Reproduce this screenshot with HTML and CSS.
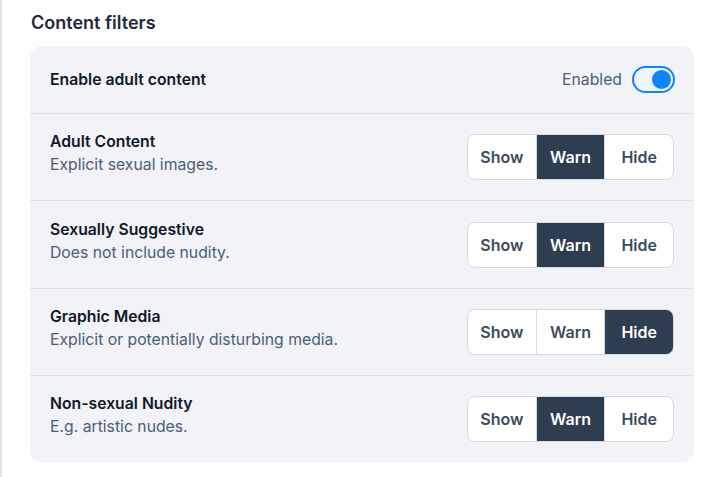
FILE: index.html
```html
<!DOCTYPE html>
<html>
<head>
<meta charset="utf-8">
<link rel="stylesheet" href="styles.css">
</head>
<body>
<div class="page">
  <h2 class="title">Content filters</h2>
  <div class="card">
    <div class="row row-first">
      <div class="label-strong">Enable adult content</div>
      <div class="toggle-wrap">
        <span class="toggle-text">Enabled</span>
        <span class="toggle"><span class="knob"></span></span>
      </div>
    </div>
    <div class="row">
      <div class="info">
        <div class="label-strong">Adult Content</div>
        <div class="desc">Explicit sexual images.</div>
      </div>
      <div class="seg">
        <span class="opt">Show</span><span class="opt active">Warn</span><span class="opt">Hide</span>
      </div>
    </div>
    <div class="row">
      <div class="info">
        <div class="label-strong">Sexually Suggestive</div>
        <div class="desc">Does not include nudity.</div>
      </div>
      <div class="seg">
        <span class="opt">Show</span><span class="opt active">Warn</span><span class="opt">Hide</span>
      </div>
    </div>
    <div class="row">
      <div class="info">
        <div class="label-strong">Graphic Media</div>
        <div class="desc">Explicit or potentially disturbing media.</div>
      </div>
      <div class="seg">
        <span class="opt">Show</span><span class="opt">Warn</span><span class="opt active">Hide</span>
      </div>
    </div>
    <div class="row">
      <div class="info">
        <div class="label-strong">Non-sexual Nudity</div>
        <div class="desc">E.g. artistic nudes.</div>
      </div>
      <div class="seg">
        <span class="opt">Show</span><span class="opt active">Warn</span><span class="opt">Hide</span>
      </div>
    </div>
  </div>
</div>
</body>
</html>
```
FILE: styles.css
```css
html, body {
  margin: 0;
  padding: 0;
  background: #ffffff;
}
body {
  font-family: Inter, "Noto Sans", sans-serif;
  color: #0f172a;
}
.page {
  border-left: 2px solid #dce3ec;
  min-height: 477px;
  box-sizing: border-box;
  padding: 10px 26px 0 28px;
}
.title {
  margin: 0 0 11px 1px;
  font-size: 18px;
  font-weight: 600;
  line-height: 25px;
  color: #1e293b;
}
.card {
  background: #f1f3f6;
  border-radius: 12px;
  width: 664px;
}
.row {
  display: flex;
  align-items: center;
  justify-content: space-between;
  padding: 20px 20px;
  border-top: 1px solid #d9e0e8;
  height: 46.35px;
}
.row-first {
  border-top: none;
  padding: 20px 19px 20px 20px;
  height: 27px;
}
.info {
  padding-bottom: 8px;
}
.label-strong {
  font-size: 15.75px;
  font-weight: 600;
  line-height: 23px;
  color: #111827;
}
.desc {
  font-size: 15.75px;
  line-height: 23px;
  color: #4b5e77;
}
.toggle-wrap {
  display: flex;
  align-items: center;
  gap: 10px;
}
.toggle-text {
  font-size: 15.75px;
  color: #4b5e77;
}
.toggle {
  width: 37px;
  height: 23px;
  border: 2px solid #1083fe;
  border-radius: 14px;
  background: #edf5ff;
  display: flex;
  align-items: center;
  justify-content: flex-end;
  padding-right: 2px;
}
.knob {
  width: 19px;
  height: 19px;
  border-radius: 50%;
  background: #1083fe;
}
.seg {
  display: flex;
  border: 1px solid #d3dae3;
  border-radius: 8px;
  overflow: hidden;
  background: #ffffff;
  height: 46px;
  width: 207px;
  box-sizing: border-box;
}
.opt {
  flex: 1;
  display: flex;
  align-items: center;
  justify-content: center;
  font-size: 16px;
  font-weight: 600;
  color: #3b4b60;
  border-left: 1px solid #d3dae3;
}
.opt:first-child {
  border-left: none;
}
.opt.active {
  background: #2e3d50;
  color: #ffffff;
}
```
